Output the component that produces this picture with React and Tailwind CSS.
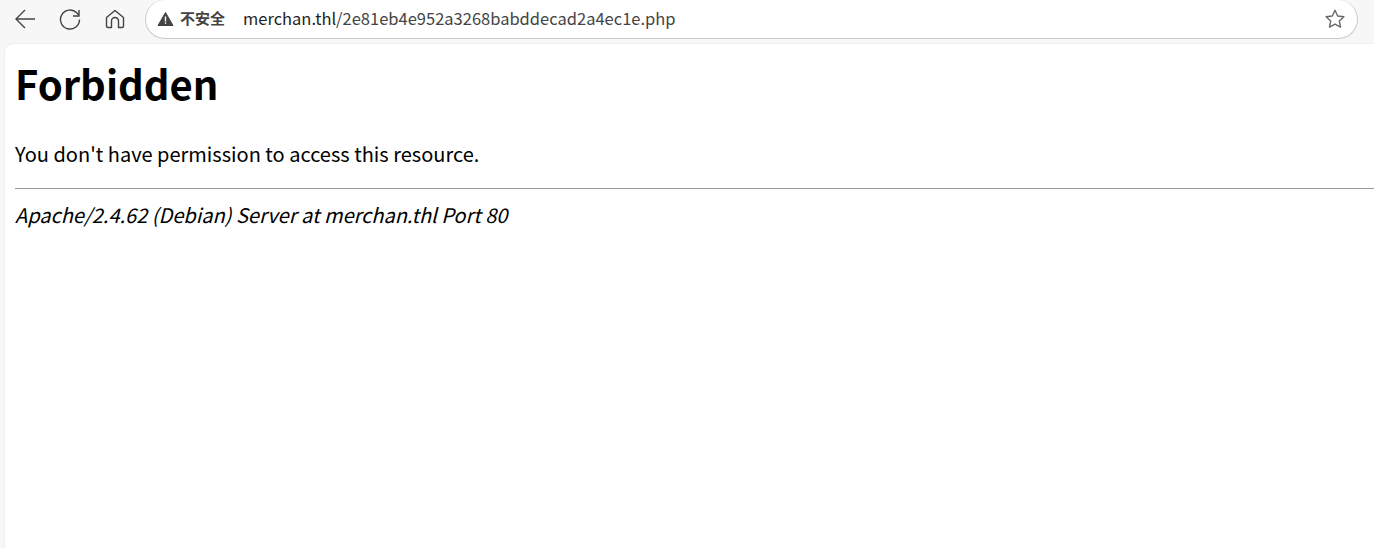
const cjk = "font-['Noto_Sans_CJK_SC','Noto_Sans',sans-serif]";

function Toolbar() {
  return (
    <div className="h-[44px] flex items-start bg-[#f7f7f7]">
      <button className="w-[50px] h-[38px] pl-[13px] flex items-center">
        <svg width="24" height="24" viewBox="0 0 24 24" fill="none" stroke="#444" strokeWidth="1.4">
          <path d="M22 12H3M12 3l-9 9 9 9" />
        </svg>
      </button>
      <button className="w-[42px] h-[38px] pl-[8px] flex items-center">
        <svg width="24" height="24" viewBox="0 0 24 24" fill="none" stroke="#444" strokeWidth="1.4">
          <path d="M21.5 12.5a9.5 9.5 0 1 1-2.8-6.7l2.3 2.5" />
          <path d="M21 3v6h-6" />
        </svg>
      </button>
      <button className="w-[53px] h-[38px] pl-[12px] flex items-center">
        <svg width="22" height="22" viewBox="0 0 22 22" fill="none" stroke="#444" strokeWidth="1.4" strokeLinejoin="round">
          <path d="M2.5 9.5 11 2.5l8.5 7V18a1.5 1.5 0 0 1-1.5 1.5h-3.5V13a3.5 3.5 0 0 0-7 0v6.5H4A1.5 1.5 0 0 1 2.5 18z" />
        </svg>
      </button>
      <div className="flex-1 mr-[16px] h-[39px] flex items-center rounded-[20px] bg-white border border-[#c9c9c9] border-t-0 pl-[11px] pr-[11px]">
        <svg width="17" height="16" viewBox="0 0 17 16">
          <path d="M8.5 1.5 16 14.5H1z" fill="#444" stroke="#444" strokeWidth="1" strokeLinejoin="round" />
          <rect x="7.8" y="5.5" width="1.4" height="5" fill="#fff" />
          <rect x="7.8" y="11.3" width="1.4" height="1.5" fill="#fff" />
        </svg>
        <span className={`ml-[6px] w-[63px] text-[15px] font-bold text-[#444] -translate-y-px ${cjk}`}>不安全</span>
        <span className={`text-[16.5px] text-[#444] -translate-y-px ${cjk}`}>
          <span className="text-[#1f1f1f]">merchan.thl</span>/2e81eb4e952a3268babddecad2a4ec1e.php
        </span>
        <svg className="ml-auto" width="22" height="22" viewBox="0 0 24 24" fill="none" stroke="#666" strokeWidth="1.5" strokeLinejoin="round">
          <path d="M12 2.5l2.9 6.2 6.8.8-5 4.6 1.3 6.7L12 17.5l-6 3.3 1.3-6.7-5-4.6 6.8-.8z" />
        </svg>
      </div>
    </div>
  );
}

export default function App() {
  return (
    <div className={`h-[548px] overflow-hidden flex flex-col bg-[#f7f7f7] ${cjk}`}>
      <Toolbar />
      <main className="flex-1 ml-[5px] rounded-tl-[8px] bg-white text-black pl-[10px] shadow-[0_0_2px_rgba(0,0,0,0.12)]">
        <h1 className="mt-[10px] text-[40px] leading-[58px] font-bold">Forbidden</h1>
        <p className="mt-[27px] text-[20px] leading-[30px]">You don't have permission to access this resource.</p>
        <hr className="mt-[19px] border-t border-[#999]" />
        <address className="mt-[11px] text-[20px] leading-[30px] italic">Apache/2.4.62 (Debian) Server at merchan.thl Port 80</address>
      </main>
    </div>
  );
}
